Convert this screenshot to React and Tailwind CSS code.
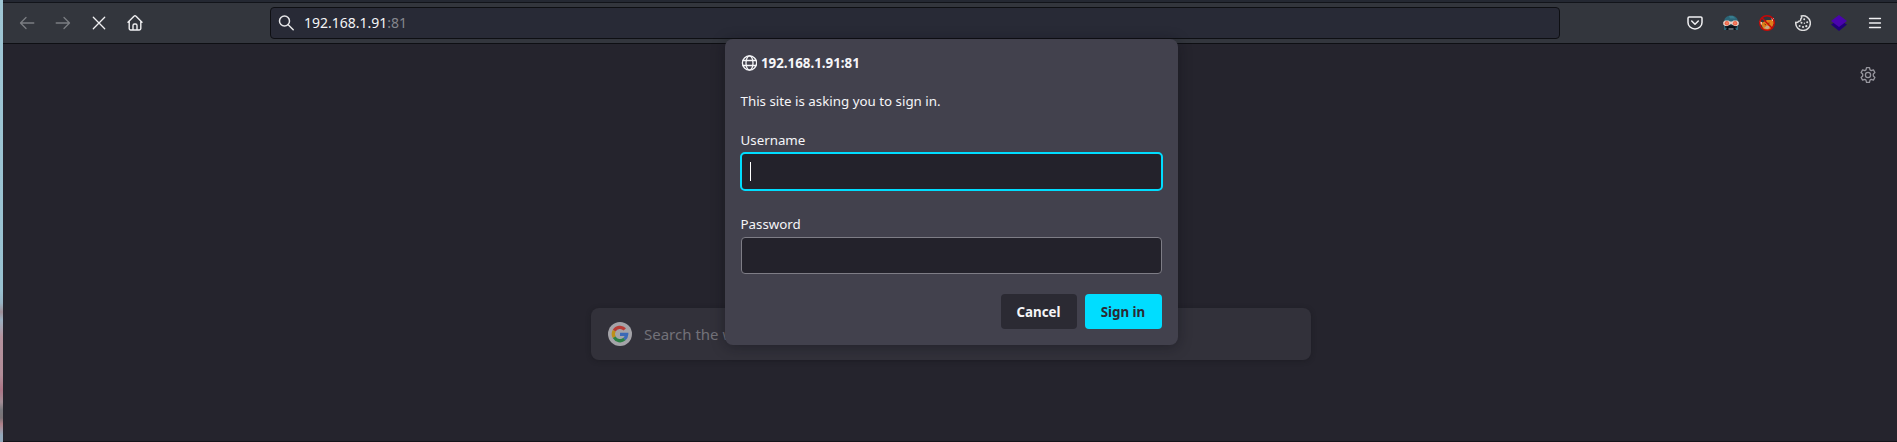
const stroke = {
  fill: 'none',
  stroke: 'currentColor',
  strokeLinecap: 'round',
  strokeLinejoin: 'round',
};

function Icon({ className = '', width = 1.3, children }) {
  return (
    <svg viewBox="0 0 16 16" strokeWidth={width} className={`size-4 shrink-0 ${className}`} {...stroke}>
      {children}
    </svg>
  );
}

function NavIcons() {
  return (
    <div className="flex w-[267px] shrink-0 items-center gap-5 pl-4 text-[#f0f0f2]">
      <Icon className="text-[#7b7d82]"><path d="M1.8 8h13M7 2.5 1.5 8 7 13.5" /></Icon>
      <Icon className="text-[#7b7d82]"><path d="M14.2 8h-13M9 2.5 14.5 8 9 13.5" /></Icon>
      <Icon><path d="m2.3 2.3 11.4 11.4M13.7 2.3 2.3 13.7" /></Icon>
      <Icon width={1.4}>
        <path d="M1 7.3 7.2 1.1a1.1 1.1 0 0 1 1.6 0L15 7.3M2.2 6.5v7.1a1.4 1.4 0 0 0 1.4 1.4h8.8a1.4 1.4 0 0 0 1.4-1.4V6.5M6 15v-4.5a1.5 1.5 0 0 1 1.5-1.5h1a1.5 1.5 0 0 1 1.5 1.5V15" />
      </Icon>
    </div>
  );
}

function Extensions() {
  return (
    <div className="ml-auto flex items-center gap-5 pr-[14px] text-[#f0f0f2]">
      <Icon width={1.5}>
        <path d="M2.2 2h11.6A1.2 1.2 0 0 1 15 3.2v4.2a7 6.5 0 0 1-14 0V3.2A1.2 1.2 0 0 1 2.2 2Z" />
        <path d="m4.7 6 3.3 3.2L11.300 6" />
      </Icon>
      <svg viewBox="0 0 16 16" className="size-4">
        <path d="M1 7.500C1 3 4 .5 8 .5s7 2.500 7 7V15H1Z" fill="#2c6577" />
        <path d="M6 1h4l2.500 2.500H7Z" fill="#387d8e" />
        <path d="M1.500 9.500h13l-1 3.500h-11Z" fill="#15202a" />
        <path d="M2 5.500h3.500l1.500 1h2l1.500-1H14L15.800 7v2.500L14 11h-2.500L8 9l-3.500 2H2L.2 9.500V7Z" fill="#e4cfc6" />
        <circle cx="3.900" cy="8.200" r="2.200" fill="#ee6548" />
        <circle cx="12.100" cy="8.200" r="2.200" fill="#ee6548" />
        <path d="M3.500 8.200h1M11.500 8.200h1" stroke="#ffb38c" strokeWidth="1.200" />
        <path d="M4.500 11h7l1.500 4H3Z" fill="#0b1118" />
        <path d="M5.500 13.500h5v1h-5Z" fill="#b5b5b7" />
      </svg>
      <svg viewBox="0 0 16 16" className="size-4">
        <path d="m.5 6 3 1.500L8 5l3.500 0 3.500-1 .5 4-1.500 2-1.500 4-4 1.500-4-1L3 11Z" fill="#df7f1b" />
        <path d="M.5 6 3 7.500 2 10.500ZM12.500 3l2.500 0v3.500l-2-1Z" fill="#f0e5d8" />
        <path d="m5 13 3-2.500 3 1-2 3Z" fill="#c9a888" />
        <path d="m5.500 9 1.500 1M10 7.500 9.800 9" stroke="#6b3b0c" />
        <circle cx="8" cy="8" r="7.300" fill="none" stroke="#c80707" strokeWidth="1.400" />
        <path d="m3 3 10 10" stroke="#c80707" strokeWidth="1.400" />
      </svg>
      <svg viewBox="0 0 16 16" className="size-4 text-[#dededf]" {...stroke} strokeWidth="1.500">
        <path d="M6.300 1A7.300 7.300 0 1 1 .8 7.200c1.200.6 2.300.2 2.700-.9 1.500.1 2.500-.8 2.200-2.300.9-.7 1.200-1.900.6-3Z" />
        <g fill="currentColor" stroke="none">
          <circle cx="9.200" cy="4.200" r="1" /><circle cx="6.500" cy="7.700" r="1" />
          <circle cx="12.200" cy="7.300" r="1" /><circle cx="9.400" cy="8.200" r=".7" />
          <circle cx="4.600" cy="10.900" r="1" /><circle cx="8" cy="12" r="1.100" />
          <circle cx="11.300" cy="11.200" r="1.100" />
        </g>
      </svg>
      <svg viewBox="0 0 16 16" className="size-4">
        <path d="M0 9.500 3 7.800h10l3 1.700-8 6.500Z" fill="#200078" />
        <path d="m8 0 8 6-8 6-8-6Z" fill="#4a04ad" />
      </svg>
      <Icon width={1.3}><path d="M2.500 3.500h11M2.500 8h11M2.500 12.500h11" /></Icon>
    </div>
  );
}

function Toolbar() {
  return (
    <header className="flex h-[44px] shrink-0 flex-col border-b border-[#0e0f13] bg-[#33363d]">
      <div className="h-[3px] shrink-0 border-b border-[#12141a] bg-[#242832]" />
      <div className="flex h-10 items-center">
        <NavIcons />
        <div className="flex h-8 w-[1290px] items-center rounded-[4px] border border-[#0e0f13] bg-[#282a36] pl-[7px]">
          <Icon width={1.5} className="text-[#e6e6e8]"><circle cx="6.500" cy="6" r="5" /><path d="m10.200 9.700 5 5" /></Icon>
          <span className="ml-[10px] text-[14px] leading-5 text-[#f4f4f6]">
            192.168.1.91<span className="text-[#85868d]">:81</span>
          </span>
        </div>
        <Extensions />
      </div>
    </header>
  );
}

function GoogleMark() {
  return (
    <svg viewBox="0 0 24 24" className="size-6 shrink-0" fill="none" strokeWidth="3.300">
      <circle cx="12" cy="12" r="12" fill="#a4a3a8" />
      <path d="M6.200 8.700A6.700 6.700 0 0 1 16.800 7.300" stroke="#b83b35" />
      <path d="M6.200 15.300a6.700 6.700 0 0 1 0-6.600" stroke="#bd9019" />
      <path d="M16.400 17.100A6.700 6.700 0 0 1 6.200 15.300" stroke="#2b8044" />
      <path d="M12 12.300h6.700a6.700 6.700 0 0 1-2.300 4.800" stroke="#3b69b6" />
    </svg>
  );
}

function SignInDialog() {
  return (
    <section className="absolute left-[722px] top-[39px] flex h-[306px] w-[453px] flex-col rounded-[8px] bg-[#42414d] px-[15px] pb-4 text-[13.333px] leading-[18px] text-[#f5f5f8] shadow-[0_2px_14px_rgba(12,12,20,0.4)]">
      <div className="mt-[14px] flex h-[19px] items-center gap-1 pl-px font-bold">
        <Icon width={1.3} className="mt-px">
          <circle cx="8.500" cy="8" r="7.100" />
          <ellipse cx="8.500" cy="8" rx="3.500" ry="7.100" />
          <path d="M2 5.500h13M2 10.500h13" />
        </Icon>
        192.168.1.91:81
      </div>
      <p className="mt-5 pl-[0.5px]">This site is asking you to sign in.</p>
      <span className="mt-[21px] pl-[0.5px]">Username</span>
      <div className="mt-[3px] flex h-[39px] shrink-0 items-center rounded-[5px] border-2 border-[#00ddff] bg-[#23222b] pl-2">
        <span className="h-[19px] w-px bg-white" />
      </div>
      <span className="mt-[24px] pl-[0.5px]">Password</span>
      <div className="mx-px mt-[4px] h-[37px] shrink-0 rounded-[4px] border border-[#7e7d86] bg-[#23222b]" />
      <div className="mr-px mt-auto flex justify-end gap-2 font-bold">
        <button className="h-[35px] w-[76px] rounded-[4px] bg-[#2b2a33] pr-px">Cancel</button>
        <button className="h-[35px] w-[77px] rounded-[4px] bg-[#00ddff] pr-px text-[#2b2a33]">Sign in</button>
      </div>
    </section>
  );
}

export default function App() {
  return (
    <div className="flex h-[442px] w-[1897px] overflow-hidden bg-[#25242d] font-['Noto_Sans',sans-serif]">
      <div className="w-[3px] shrink-0 bg-[linear-gradient(#9fc6d4_0px,#98c1d0_290px,#98b4c4_303px,#a08f98_312px,#9bb0c0_320px,#b5929d_337px,#b28d98_375px,#ad7586_390px,#a38d96_402px,#77777c_410px,#7a7276_418px,#b08089_424px,#93a8bb_435px,#93a8bb_442px)]" />
      <div className="relative flex min-w-0 flex-1 flex-col border-b border-[#15151b]">
        <Toolbar />
        <main className="flex flex-1 flex-col">
          <div className="mr-[21px] mt-[23px] self-end text-[#97969e]">
            <svg viewBox="0 0 16 16" className="size-4" {...stroke} strokeWidth="1.300">
              <path d="M6.500.7h3l.5 2.200 1.200.7 2.200-.7 1.500 2.600L13.300 7v2l1.600 1.500-1.500 2.600-2.200-.7-1.200.7-.5 2.200h-3L6 13.100l-1.200-.7-2.200.7-1.500-2.600L2.700 9V7L1.100 5.500l1.500-2.600 2.200.7L6 2.900Z" />
              <circle cx="8" cy="8" r="2.600" />
            </svg>
          </div>
          <div className="ml-[588px] mt-[225px] flex h-[52px] w-[720px] items-center rounded-[8px] bg-[#32313a] pl-[17px] text-[15px] text-[#737279] shadow-[0_1px_5px_rgba(20,20,26,0.4)]">
            <GoogleMark />
            <span className="ml-3">Search the web</span>
          </div>
        </main>
        <SignInDialog />
      </div>
    </div>
  );
}
